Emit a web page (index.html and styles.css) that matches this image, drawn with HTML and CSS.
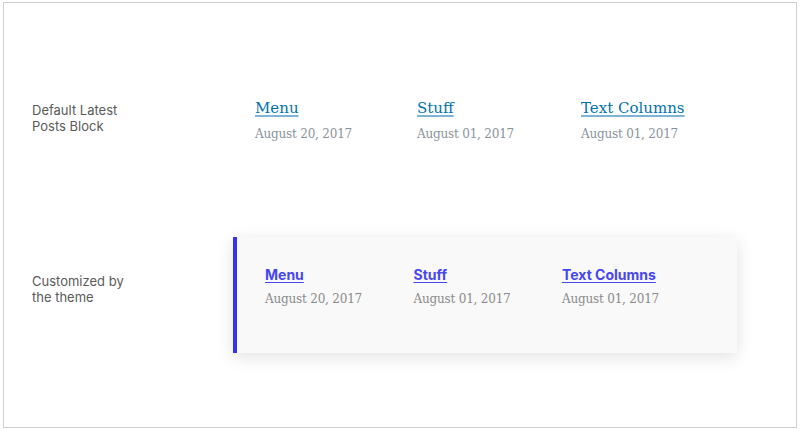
FILE: index.html
```html
<!DOCTYPE html>
<html>
<head>
<meta charset="utf-8">
<link rel="stylesheet" href="styles.css">
</head>
<body>
<div class="frame">
  <section class="row row-default">
    <div class="label">Default Latest<br>Posts Block</div>
    <ul class="posts default-posts">
      <li><a href="#">Menu</a><time>August 20, 2017</time></li>
      <li><a href="#">Stuff</a><time>August 01, 2017</time></li>
      <li><a href="#">Text Columns</a><time>August 01, 2017</time></li>
    </ul>
  </section>
  <section class="row row-theme">
    <div class="label">Customized by<br>the theme</div>
    <div class="panel">
      <ul class="posts theme-posts">
        <li><a href="#">Menu</a><time>August 20, 2017</time></li>
        <li><a href="#">Stuff</a><time>August 01, 2017</time></li>
        <li><a href="#">Text Columns</a><time>August 01, 2017</time></li>
      </ul>
    </div>
  </section>
</div>
</body>
</html>
```
FILE: styles.css
```css
html, body { margin: 0; padding: 0; background: #fff; }
body { width: 800px; height: 430px; overflow: hidden; }
.frame {
  margin: 2px 0 0 3px;
  width: 792px;
  height: 424px;
  border: 1px solid #cfcfcf;
  box-sizing: content-box;
}
.row {
  display: grid;
  grid-template-columns: 201px 1fr;
  padding-left: 28px;
}
.row-default { margin-top: 94px; }
.row-theme { margin-top: 94px; }
.label {
  font-family: "Inter", "Liberation Sans", sans-serif;
  font-size: 13px;
  line-height: 16px;
  color: #5a5a5a;
}
.row-default .label { margin-top: 5px; }
.row-theme .label { margin-top: 36px; }
.posts {
  list-style: none;
  margin: 0;
  padding: 0;
  display: flex;
}
.posts li { display: flex; flex-direction: column; align-items: flex-start; }
.posts time {
  font-family: "DejaVu Serif", "Liberation Serif", serif;
  font-size: 12px;
  letter-spacing: -0.2px;
  line-height: 18px;
  color: #8a939b;
}
.default-posts { padding-left: 22px; }
.default-posts li:nth-child(1) { width: 162px; }
.default-posts li:nth-child(2) { width: 164px; }
.default-posts a {
  font-family: "DejaVu Serif", "Liberation Serif", serif;
  font-size: 15px;
  line-height: 22px;
  color: #0073aa;
  text-decoration-color: #7fb3d5;
  text-decoration-thickness: 2px;
  text-underline-offset: 2px;
  margin-bottom: 6px;
}
.panel {
  height: 116px;
  width: 504px;
  background: #f9f9f9;
  border-left: 4px solid #3535e6;
  box-shadow: 0 4px 16px rgba(0,0,0,0.12);
  padding: 30px 0 0 28px;
  box-sizing: border-box;
}
.theme-posts li { width: 148.5px; }
.theme-posts a {
  font-family: "Inter", "Liberation Sans", sans-serif;
  font-weight: 700;
  font-size: 14px;
  line-height: 16px;
  color: #4646f2;
  text-decoration-thickness: 1px;
  text-underline-offset: 2px;
  margin-bottom: 7px;
}
.theme-posts time { color: #8a8a8a; }
```
